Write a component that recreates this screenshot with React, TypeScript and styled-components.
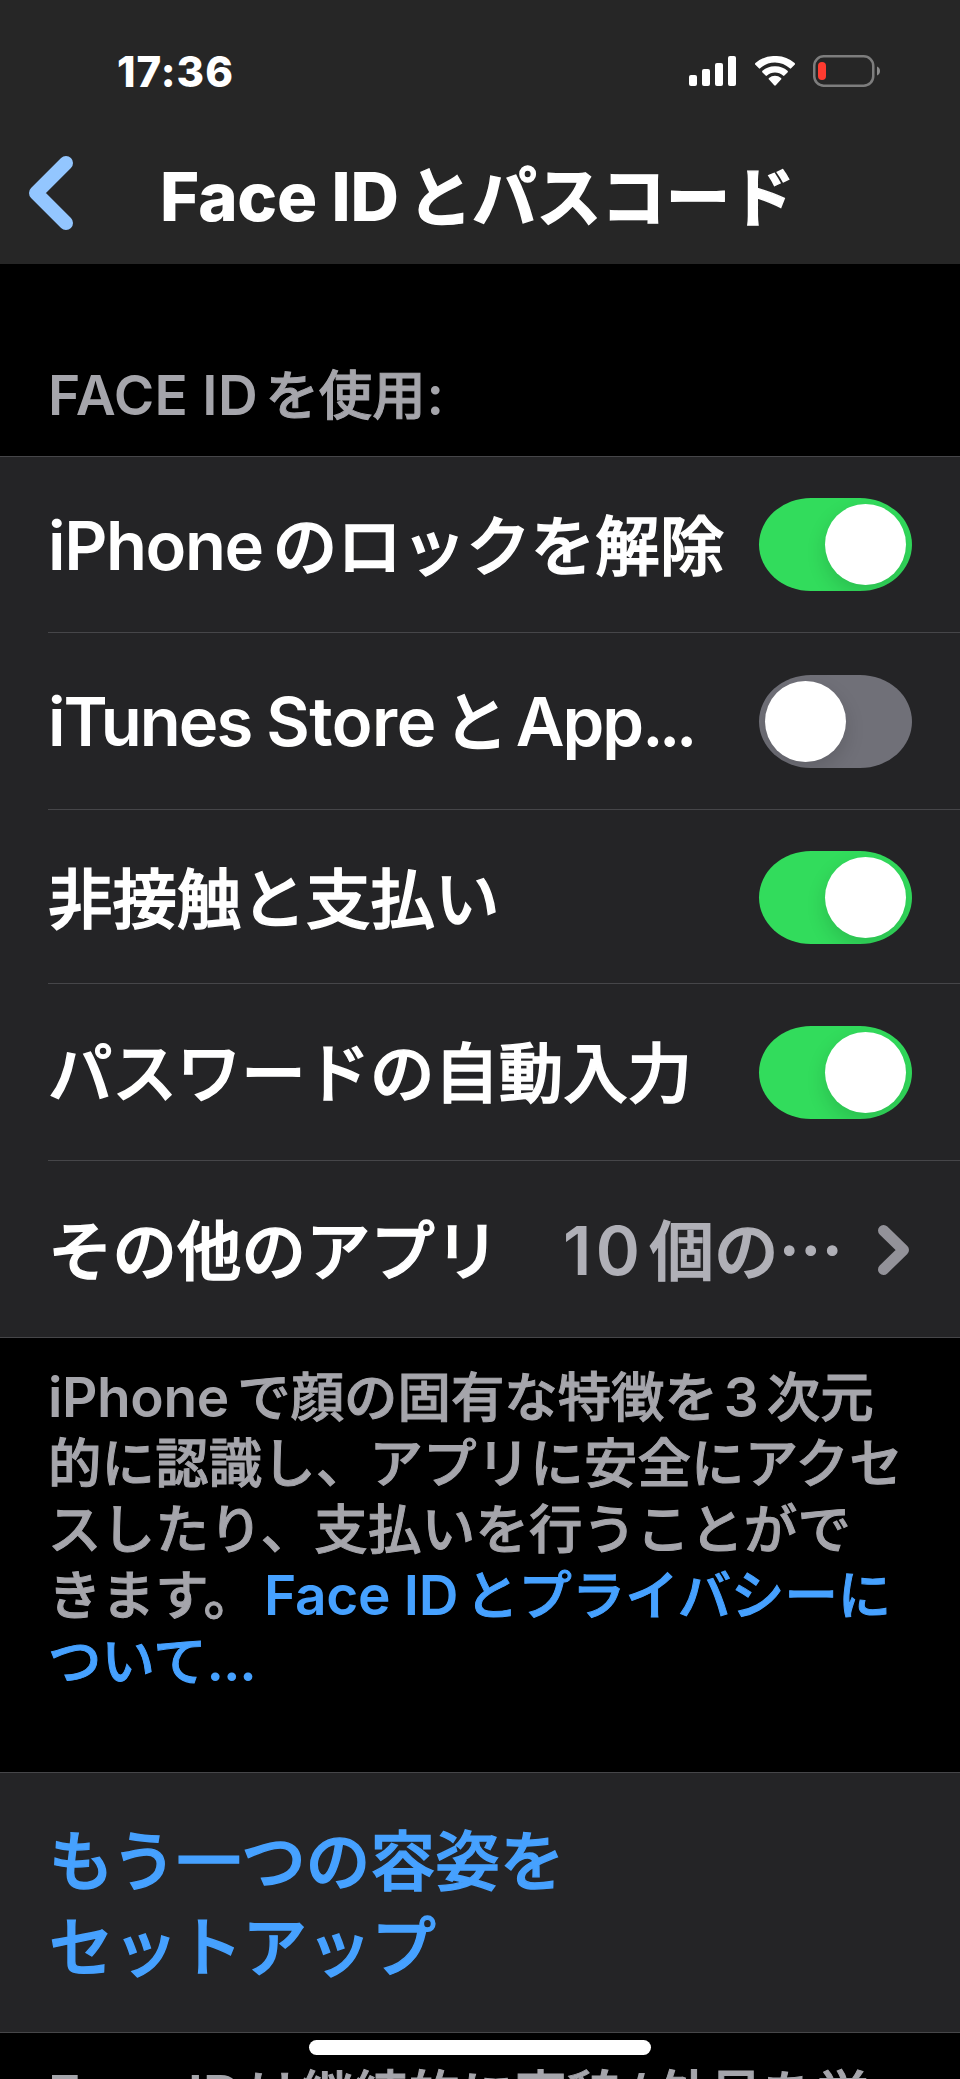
import React, { useState } from 'react';
import styled, { createGlobalStyle } from 'styled-components';

const latinFamily = '"Inter", "Noto Sans CJK JP", sans-serif';
const kanaFamily = '"Noto Sans CJK JP", "Inter", sans-serif';

const color = {
  bar: '#262626',
  cell: '#242426',
  line: '#464649',
  label: '#ffffff',
  caption: '#a5a5ab',
  value: '#b0b0b7',
  chevron: '#939299',
  link: '#46a1ff',
  back: '#93c6ff',
  on: '#32dc5c',
  off: '#707078',
  low: '#ff3b30',
};

const GlobalStyle = createGlobalStyle`
  * { box-sizing: border-box; }
  body { margin: 0; background: #000; }
`;

const Screen = styled.main`
  position: relative;
  width: 960px;
  height: 2079px;
  overflow: hidden;
  background: #000;
  color: ${color.label};
  font-family: ${latinFamily};
  text-spacing-trim: space-all;
`;

const TopBar = styled.header`
  height: 264px;
  background: ${color.bar};
`;

const StatusBar = styled.div`
  display: flex;
  justify-content: space-between;
  height: 108px;
  padding: 46px 80px 0 117px;
`;

const Clock = styled.time`
  padding-top: 1px;
  font-size: 42px;
  font-weight: 780;
  line-height: 50px;
  letter-spacing: 1px;
`;

const StatusIcons = styled.div`
  display: flex;
  align-items: center;
  height: 50px;
`;

const WifiSlot = styled.span`
  display: flex;
  margin: 0 17px 0 18px;
`;

const NavBar = styled.nav`
  display: flex;
  align-items: center;
  height: 156px;
  padding: 14px 0 0 29px;
`;

const BackButton = styled.button`
  display: flex;
  padding: 0;
  border: 0;
  background: none;
`;

const Title = styled.h1`
  margin: 8px 0 0 87px;
  font-size: 67px;
  font-weight: 800;
  line-height: 80px;
  white-space: nowrap;
`;

const Latin = styled.span<{ $track?: number; $before?: number; $after?: number }>`
  letter-spacing: ${(p) => p.$track ?? 0}px;
  margin-left: ${(p) => p.$before ?? 0}px;
  margin-right: ${(p) => p.$after ?? 0}px;
`;

const Kana = styled.span<{ $small?: boolean; $bold?: boolean; $track?: number }>`
  font-family: ${kanaFamily};
  font-size: ${(p) => (p.$small ? '53.4px' : '64.5px')};
  font-weight: ${(p) => (p.$bold ? 700 : 500)};
  line-height: 1;
  letter-spacing: ${(p) => p.$track ?? 0}px;
  -webkit-text-stroke: ${(p) => (p.$small ? '1px' : '1.4px')} currentColor;
`;

const SectionHeader = styled.h2`
  margin: 0;
  padding: 98px 48px 28px;
  color: ${color.caption};
  font-size: 55px;
  font-weight: 560;
  line-height: 66px;
`;

const Group = styled.section`
  border-top: 1px solid ${color.line};
  border-bottom: 1px solid ${color.line};
  background: ${color.cell};
`;

const Row = styled.div<{ $height: number; $drop?: number }>`
  display: flex;
  align-items: center;
  justify-content: space-between;
  height: ${(p) => p.$height}px;
  margin-left: 48px;
  padding-top: ${(p) => p.$drop ?? 0}px;
  padding-right: 48px;
  border-bottom: 1px solid ${color.line};

  &:last-child {
    border-bottom: 0;
    padding-right: 51px;
  }
`;

const RowLabel = styled.div`
  padding-top: 2px;
  font-size: 67px;
  font-weight: 580;
  line-height: 80px;
  white-space: nowrap;
`;

const RowValue = styled(RowLabel)`
  margin: 0 35px 0 auto;
  color: ${color.value};
`;

const Track = styled.button<{ $on: boolean }>`
  display: flex;
  align-items: center;
  justify-content: ${(p) => (p.$on ? 'flex-end' : 'flex-start')};
  flex: none;
  width: 153px;
  height: 93px;
  padding: 0 6px;
  overflow: hidden;
  border: 0;
  border-radius: 52px / 46.5px;
  background: ${(p) => (p.$on ? color.on : color.off)};
`;

const Knob = styled.span`
  width: 81px;
  height: 81px;
  border-radius: 50%;
  background: #fff;
  box-shadow: 0 8px 20px rgba(0, 0, 0, 0.14);
`;

const Footnote = styled.p<{ $top: number }>`
  margin: 0;
  padding: ${(p) => p.$top}px 0 78px 48px;
  color: ${color.caption};
  font-size: 55px;
  font-weight: 560;
  line-height: 66px;
  white-space: nowrap;
`;

const Link = styled.a`
  color: ${color.link};
`;

const SetupButton = styled.button`
  display: block;
  width: 100%;
  height: 259px;
  padding: 3px 0 0 49px;
  border: 0;
  background: none;
  color: ${color.link};
  font-family: inherit;
  font-size: 67px;
  line-height: 86px;
  text-align: left;
`;

const HomeIndicator = styled.div`
  position: absolute;
  left: 309px;
  bottom: 24px;
  width: 342px;
  height: 15px;
  border-radius: 7.5px;
  background: #fff;
`;

const SignalIcon = () => (
  <svg width="47" height="30" viewBox="0 0 47 30" fill="#fff">
    <rect x="0" y="19" width="8" height="11" rx="2" />
    <rect x="13" y="13" width="8" height="17" rx="2" />
    <rect x="26" y="7" width="8" height="23" rx="2" />
    <rect x="39" y="0" width="8" height="30" rx="2" />
  </svg>
);

const WifiIcon = () => (
  <svg width="42" height="30" viewBox="0 0 42 30" fill="#fff">
    <path d="M21 6.400c5.700 0 10.900 2.200 14.800 5.900a.9.9 0 0 0 1.300 0l3.500-3.600a1.100 1.100 0 0 0 0-1.600A28.400 28.400 0 0 0 21 0 28.400 28.400 0 0 0 1.400 7.100a1.100 1.100 0 0 0 0 1.600l3.500 3.600a.9.9 0 0 0 1.300 0A21.500 21.500 0 0 1 21 6.400z" />
    <path d="M21 16.600c3.100 0 5.900 1.100 8 3a1 1 0 0 0 1.400 0l3.100-3.200a1.200 1.200 0 0 0 0-1.700A18.400 18.400 0 0 0 21 10.200 18.400 18.400 0 0 0 8.500 14.700a1.200 1.200 0 0 0 0 1.700l3.100 3.200a1 1 0 0 0 1.400 0c2.100-1.900 4.900-3 8-3z" />
    <path d="M27 23.400a1 1 0 0 0 0-1.500 9.400 9.400 0 0 0-12 0 1 1 0 0 0 0 1.500l5.200 5.900a1.100 1.100 0 0 0 1.600 0z" />
  </svg>
);

const BatteryIcon = () => (
  <svg width="67" height="32" viewBox="0 0 67 32">
    <rect x="1.250" y="1.250" width="59" height="29.500" rx="9.500" fill="none" stroke="#7d7d7d" strokeWidth="2.500" />
    <rect x="5" y="7" width="8" height="18" rx="4" fill={color.low} />
    <path d="M64 11.500c2 .8 3 2.500 3 4.500s-1 3.700-3 4.500z" fill="#8a8a8a" />
  </svg>
);

const BackIcon = () => (
  <svg width="44" height="74" viewBox="0 0 44 74" fill="none">
    <path d="M37 7 7 37l30 30" stroke={color.back} strokeWidth="14" strokeLinecap="round" strokeLinejoin="round" />
  </svg>
);

const DisclosureIcon = () => (
  <svg width="31" height="50" viewBox="0 0 31 50" fill="none">
    <path d="M5.500 5.500 25.500 25l-20 19.500" stroke={color.chevron} strokeWidth="11" strokeLinecap="round" strokeLinejoin="round" />
  </svg>
);

const Toggle = ({ initial }: { initial: boolean }) => {
  const [on, setOn] = useState(initial);
  return (
    <Track type="button" role="switch" aria-checked={on} $on={on} onClick={() => setOn(!on)}>
      <Knob />
    </Track>
  );
};

export default function App() {
  return (
    <Screen>
      <GlobalStyle />
      <TopBar>
        <StatusBar>
          <Clock>17:36</Clock>
          <StatusIcons>
            <SignalIcon />
            <WifiSlot>
              <WifiIcon />
            </WifiSlot>
            <BatteryIcon />
          </StatusIcons>
        </StatusBar>
        <NavBar>
          <BackButton type="button" aria-label="戻る">
            <BackIcon />
          </BackButton>
          <Title>
            <Latin $track={-0.2} $after={9}>Face ID</Latin>
            <Kana $bold>とパスコード</Kana>
          </Title>
        </NavBar>
      </TopBar>

      <SectionHeader>
        <Latin $track={0.3} $after={7.5}>FACE ID</Latin>
        <Kana $small>を使用</Kana>
        <Latin $before={1}>:</Latin>
      </SectionHeader>

      <Group>
        <Row $height={176}>
          <RowLabel>
            <Latin $track={-1.4} $after={10}>iPhone</Latin>
            <Kana>のロックを解除</Kana>
          </RowLabel>
          <Toggle initial />
        </Row>
        <Row $height={177}>
          <RowLabel>
            <Latin $track={-2}>iTunes </Latin>
            <Latin $track={-0.5} $after={8}>Store</Latin>
            <Kana>と</Kana>
            <Latin $track={-2} $before={7.5}>App</Latin>
            <Latin $track={-4.5}>...</Latin>
          </RowLabel>
          <Toggle initial={false} />
        </Row>
        <Row $height={174} $drop={2}>
          <RowLabel>
            <Kana>非接触と支払い</Kana>
          </RowLabel>
          <Toggle initial />
        </Row>
        <Row $height={177}>
          <RowLabel>
            <Kana $track={-0.1}>パスワードの自動入力</Kana>
          </RowLabel>
          <Toggle initial />
        </Row>
        <Row $height={176} $drop={2}>
          <RowLabel>
            <Kana>その他のアプリ</Kana>
          </RowLabel>
          <RowValue>
            <Latin $track={4.5} $after={5}>10</Latin>
            <Kana>個の…</Kana>
          </RowValue>
          <DisclosureIcon />
        </Row>
      </Group>

      <Footnote $top={26}>
        <Latin $track={-0.4} $after={8.5}>iPhone</Latin>
        <Kana $small>で顔の固有な特徴を</Kana>
        <Latin $before={6} $after={8}>3</Latin>
        <Kana $small>次元</Kana>
        <br />
        <Kana $small $track={0.2}>的に認識し、アプリに安全にアクセ</Kana>
        <br />
        <Kana $small $track={0.3}>スしたり、支払いを行うことがで</Kana>
        <br />
        <Kana $small $track={0.2}>きます。</Kana>
        <Link>
          <Latin $before={7} $track={-0.3} $after={7}>Face ID</Latin>
          <Kana $small>とプライバシーに</Kana>
          <br />
          <Kana $small>ついて</Kana>
          <Latin $track={-1.2}>...</Latin>
        </Link>
      </Footnote>

      <Group>
        <SetupButton type="button">
          <Kana $track={0.2}>もう一つの容姿を</Kana>
          <br />
          <Kana>セットアップ</Kana>
        </SetupButton>
      </Group>

      <Footnote $top={29}>
        <Latin $track={-0.3} $after={5}>Face ID</Latin>
        <Kana $small>は継続的に容貌</Kana>
        <Latin $before={4} $after={10}>/</Latin>
        <Kana $small>外見を学</Kana>
      </Footnote>

      <HomeIndicator />
    </Screen>
  );
}
